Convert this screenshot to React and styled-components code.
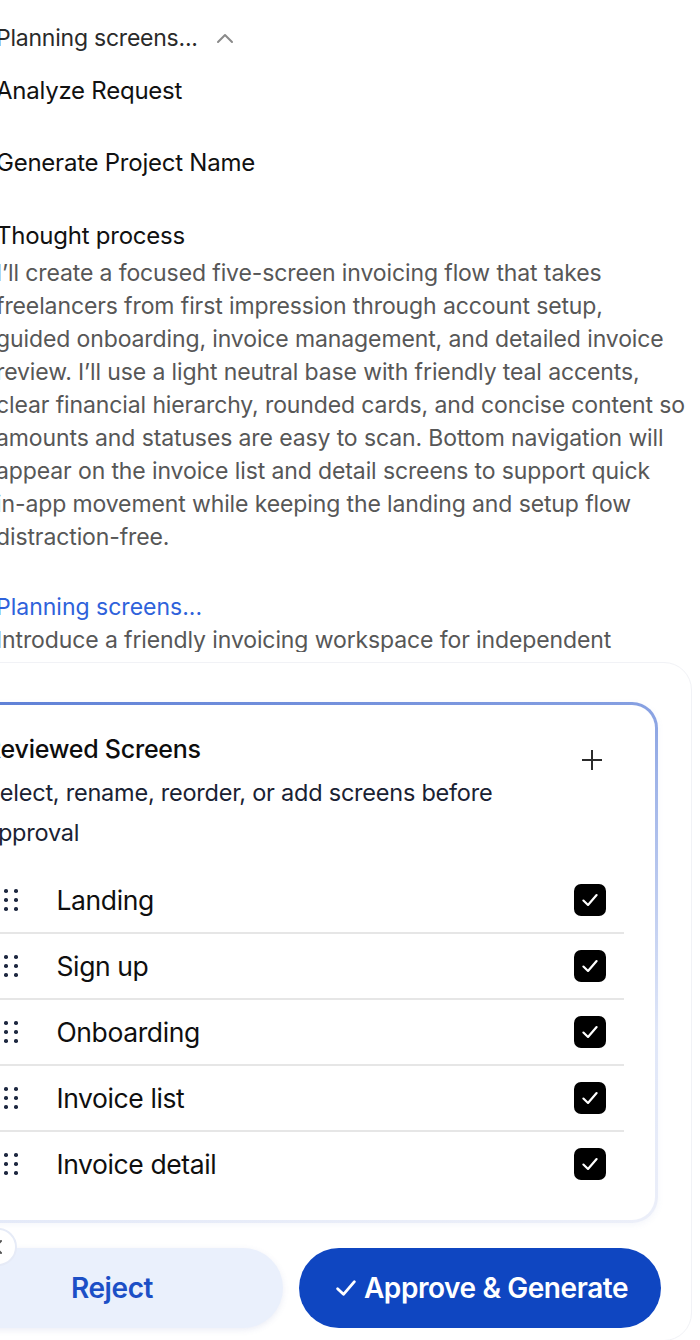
import React from "react";
import styled, { createGlobalStyle } from "styled-components";

const GlobalStyle = createGlobalStyle`
  html, body {
    margin: 0;
    padding: 0;
    background: #fff;
    overflow: hidden;
  }
  body {
    font-family: Inter, "Noto Sans", sans-serif;
    -webkit-font-smoothing: antialiased;
  }
`;

const Page = styled.div`
  width: 700px;
  height: 1340px;
  position: relative;
  overflow: hidden;
`;

const Log = styled.div`
  height: 652px;
  overflow: hidden;
  padding: 23px 0 0;
  margin-left: -4px;
  box-sizing: border-box;
`;

const StepRow = styled.div`
  display: flex;
  align-items: center;
  gap: 18px;
  font-size: ${(p) => (p.$muted ? 23 : 24)}px;
  line-height: 30px;
  letter-spacing: -0.01em;
  color: ${(p) => (p.$muted ? "#2a2a2a" : "#111")};
  margin-bottom: ${(p) => p.$gap || 0}px;
`;

const Thought = styled.p`
  margin: ${(p) => (p.$flush ? 0 : 6)}px 0 0;
  width: 720px;
  font-size: 23px;
  line-height: 33px;
  letter-spacing: -0.005em;
  color: #575757;
`;

const Status = styled.div`
  margin-top: 37px;
  font-size: 23px;
  line-height: 33px;
  color: #2e62db;
`;

const Panel = styled.div`
  margin: 10px 0 0 -80px;
  width: 772px;
  box-sizing: border-box;
  border: 1px solid #f1f2f6;
  border-radius: 28px;
  padding: 39px 33px 12px 30px;
  position: relative;
`;

const Card = styled.section`
  border: 3px solid transparent;
  border-radius: 26px;
  background:
    linear-gradient(#fff, #fff) padding-box,
    linear-gradient(170deg, #5d7fd6 0%, #9db2e8 30%, #dfe6f8 70%, #eceff9 100%) border-box;
  padding: 27px 31px 24px 31px;
  box-shadow: 0 2px 6px rgba(120, 140, 200, 0.08);
`;

const CardHead = styled.div`
  display: flex;
  align-items: flex-start;
  justify-content: space-between;
  margin-bottom: 15px;
`;

const CardTitle = styled.h3`
  margin: 0;
  font-size: 25px;
  line-height: 34px;
  font-weight: 500;
  letter-spacing: -0.01em;
  color: #0d0d0d;
`;

const CardSub = styled.p`
  margin: 7px 0 0;
  width: 540px;
  font-size: 23.5px;
  line-height: 40px;
  letter-spacing: -0.01em;
  color: #1a2233;
`;

const AddButton = styled.button`
  border: 0;
  background: none;
  padding: 0;
  margin: 16px 20px 0 0;
  color: #2b2b2b;
  display: flex;
`;

const List = styled.ul`
  list-style: none;
  margin: 0;
  padding: 0;
`;

const Row = styled.li`
  display: flex;
  align-items: center;
  height: 64px;
  padding: 0 18px 0 16px;
  border-bottom: ${(p) => (p.$last ? "0" : "2px solid #e6e6e6")};
`;

const Grip = styled.div`
  display: grid;
  grid-template-columns: repeat(2, 3.5px);
  grid-template-rows: repeat(3, 3.5px);
  column-gap: 6.5px;
  row-gap: 5.5px;
  margin: 0 39px 0 3px;

  span {
    border-radius: 50%;
    background: #1d2840;
  }
`;

const RowLabel = styled.span`
  flex: 1;
  font-size: 26.5px;
  letter-spacing: -0.015em;
  color: #0f0f0f;
`;

const Check = styled.span`
  width: 32px;
  height: 32px;
  border-radius: 7px;
  background: #000;
  display: flex;
  align-items: center;
  justify-content: center;
`;

const Actions = styled.div`
  display: flex;
  gap: 16px;
  margin: 25px 0 0 -10px;
`;

const Button = styled.button`
  height: 80px;
  border: 0;
  border-radius: 40px;
  font-family: Inter, sans-serif;
  font-size: 28px;
  font-weight: 600;
  letter-spacing: -0.015em;
  display: flex;
  align-items: center;
  justify-content: center;
  gap: 4px;
  flex: 0 0 ${(p) => p.$w}px;
  background: ${(p) => (p.$primary ? "#0f46c1" : "#eaf0fc")};
  color: ${(p) => (p.$primary ? "#fff" : "#1c4fc6")};
  box-shadow: ${(p) => (p.$primary ? "none" : "0 2px 6px rgba(90, 110, 180, 0.12)")};
  padding: 0;
`;

const Collapse = styled.button`
  position: absolute;
  left: 58px;
  bottom: 74px;
  width: 38px;
  height: 38px;
  border-radius: 50%;
  border: 2px solid #e6ebf7;
  background: #fff;
  padding: 0;
  display: flex;
  align-items: center;
  justify-content: center;
  color: #555;
`;

const screens = ["Landing", "Sign up", "Onboarding", "Invoice list", "Invoice detail"];

// the thought text is broken where the chat column wraps it
const thoughtLines = [
  "I’ll create a focused five-screen invoicing flow that takes",
  "freelancers from first impression through account setup,",
  "guided onboarding, invoice management, and detailed invoice",
  "review. I’ll use a light neutral base with friendly teal accents,",
  "clear financial hierarchy, rounded cards, and concise content so",
  "amounts and statuses are easy to scan. Bottom navigation will",
  "appear on the invoice list and detail screens to support quick",
  "in-app movement while keeping the landing and setup flow",
  "distraction-free.",
];

const ChevronUp = () => (
  <svg width="18" height="12" viewBox="0 0 18 12" fill="none">
    <path d="M2 10 L9 3 L16 10" stroke="#8a8a8a" strokeWidth="2" strokeLinecap="round" strokeLinejoin="round" />
  </svg>
);

const Plus = () => (
  <svg width="24" height="24" viewBox="0 0 24 24" fill="none">
    <path d="M12 2v20M2 12h20" stroke="currentColor" strokeWidth="2" />
  </svg>
);

const Tick = ({ size = 20, color = "#fff", width = 2 }) => (
  <svg width={size} height={size} viewBox="0 0 20 20" fill="none">
    <path d="M4 10.5 L8.2 14.5 L16 5.5" stroke={color} strokeWidth={width} strokeLinecap="round" strokeLinejoin="round" />
  </svg>
);

export default function App() {
  return (
    <>
      <GlobalStyle />
      <Page>
        <Log>
          <StepRow $muted $gap={23}>
            Planning screens... <ChevronUp />
          </StepRow>
          <StepRow $gap={42}>Analyze Request</StepRow>
          <StepRow $gap={43}>Generate Project Name</StepRow>
          <StepRow>Thought process</StepRow>
          <Thought>
            {thoughtLines.map((line, i) => (
              <React.Fragment key={i}>
                {line}
                {i < thoughtLines.length - 1 && <br />}
              </React.Fragment>
            ))}
          </Thought>
          <Status>Planning screens...</Status>
          <Thought $flush>
            Introduce a friendly invoicing workspace for independent
            <br />
            professionals.
          </Thought>
        </Log>

        <Panel>
          <Card>
            <CardHead>
              <div>
                <CardTitle>Reviewed Screens</CardTitle>
                <CardSub>Select, rename, reorder, or add screens before approval</CardSub>
              </div>
              <AddButton aria-label="Add screen">
                <Plus />
              </AddButton>
            </CardHead>
            <List>
              {screens.map((name, i) => (
                <Row key={name} $last={i === screens.length - 1}>
                  <Grip>
                    {Array.from({ length: 6 }).map((_, d) => (
                      <span key={d} />
                    ))}
                  </Grip>
                  <RowLabel>{name}</RowLabel>
                  <Check>
                    <Tick size={22} width={2} />
                  </Check>
                </Row>
              ))}
            </List>
          </Card>

          <Actions>
            <Button $w={342}>Reject</Button>
            <Button $w={362} $primary>
              <Tick size={28} width={2} />
              Approve &amp; Generate
            </Button>
          </Actions>

          <Collapse aria-label="Collapse">
            <svg width="14" height="18" viewBox="0 0 14 18" fill="none">
              <path d="M10 3 L4 9 L10 15" stroke="#555" strokeWidth="2" strokeLinecap="round" strokeLinejoin="round" />
            </svg>
          </Collapse>
        </Panel>
      </Page>
    </>
  );
}
